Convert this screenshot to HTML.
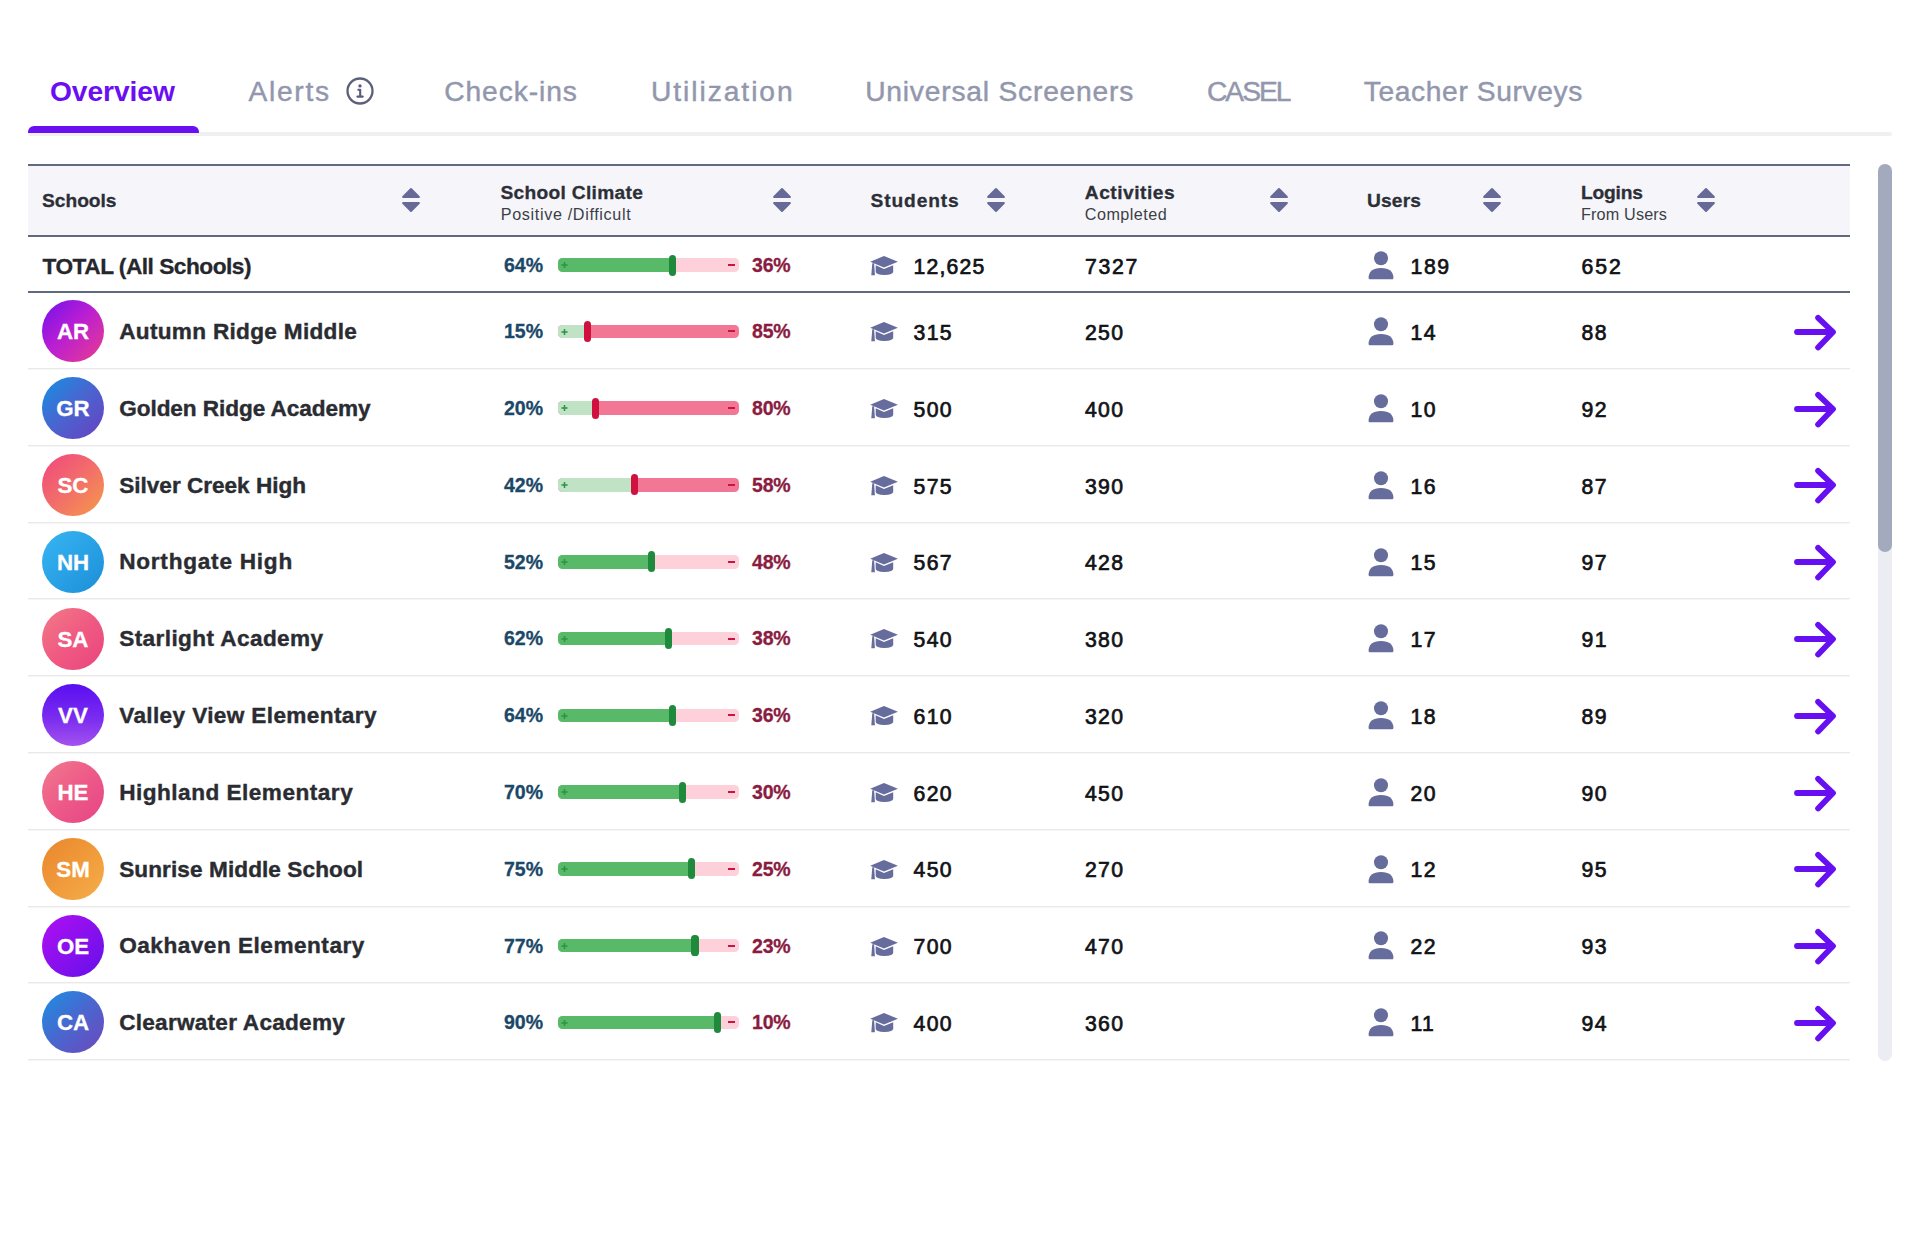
<!DOCTYPE html><html><head><meta charset="utf-8"><style>
html,body{margin:0;padding:0;background:#fff;width:1920px;height:1242px;overflow:hidden;}
body{position:relative;font-family:"Liberation Sans",sans-serif;}
.t{position:absolute;white-space:nowrap;line-height:1;font-weight:700;}
.a{position:absolute;}
</style></head><body>
<div class="a" style="left:28px;top:132px;width:1864px;height:4px;background:#eff0f2;border-radius:2px;"></div><div class="a" style="left:28px;top:126px;width:171px;height:7px;background:#6a0ff2;border-radius:6px 6px 0 0;"></div><svg class="a" style="left:343.5px;top:74.5px" width="32" height="32" viewBox="0 0 32 32"><circle cx="16" cy="16" r="12.5" fill="none" stroke="#5c6079" stroke-width="2.3"/><circle cx="16" cy="10.9" r="1.7" fill="#585c7c"/><path d="M14.3 14.7h1.9v6.4" fill="none" stroke="#585c7c" stroke-width="2.1" stroke-linecap="round" stroke-linejoin="round"/><path d="M13.4 21.6h5.3" fill="none" stroke="#585c7c" stroke-width="2.2" stroke-linecap="round"/></svg><div class="a" style="left:28px;top:164px;width:1822px;height:2px;background:#626a82;"></div><div class="a" style="left:28px;top:166px;width:1822px;height:69px;background:#f6f6fa;"></div><div class="a" style="left:28px;top:235px;width:1822px;height:2px;background:#606a7c;"></div><div class="a" style="left:28px;top:291px;width:1822px;height:2px;background:#606a7c;"></div><svg class="a" style="left:401.30px;top:186.00px" width="20" height="28" viewBox="-10 -14 20 28"><path d="M0 -11 L7.9 -3 H-7.9 Z M0 11 L7.9 3 H-7.9 Z" fill="#676a97" stroke="#676a97" stroke-width="2" stroke-linejoin="round"/></svg><svg class="a" style="left:771.90px;top:186.00px" width="20" height="28" viewBox="-10 -14 20 28"><path d="M0 -11 L7.9 -3 H-7.9 Z M0 11 L7.9 3 H-7.9 Z" fill="#676a97" stroke="#676a97" stroke-width="2" stroke-linejoin="round"/></svg><svg class="a" style="left:985.50px;top:186.00px" width="20" height="28" viewBox="-10 -14 20 28"><path d="M0 -11 L7.9 -3 H-7.9 Z M0 11 L7.9 3 H-7.9 Z" fill="#676a97" stroke="#676a97" stroke-width="2" stroke-linejoin="round"/></svg><svg class="a" style="left:1268.70px;top:186.00px" width="20" height="28" viewBox="-10 -14 20 28"><path d="M0 -11 L7.9 -3 H-7.9 Z M0 11 L7.9 3 H-7.9 Z" fill="#676a97" stroke="#676a97" stroke-width="2" stroke-linejoin="round"/></svg><svg class="a" style="left:1482.30px;top:186.00px" width="20" height="28" viewBox="-10 -14 20 28"><path d="M0 -11 L7.9 -3 H-7.9 Z M0 11 L7.9 3 H-7.9 Z" fill="#676a97" stroke="#676a97" stroke-width="2" stroke-linejoin="round"/></svg><svg class="a" style="left:1696.00px;top:186.00px" width="20" height="28" viewBox="-10 -14 20 28"><path d="M0 -11 L7.9 -3 H-7.9 Z M0 11 L7.9 3 H-7.9 Z" fill="#676a97" stroke="#676a97" stroke-width="2" stroke-linejoin="round"/></svg><div class="a" style="left:557.5px;top:258.20px;width:181px;height:13.6px;border-radius:4.5px;overflow:hidden;background:#fdd0da;"><div style="position:absolute;left:0;top:0;width:114.83px;height:100%;background:#58b968;"></div></div><svg class="a" style="left:560.0px;top:258.20px" width="10" height="14" viewBox="0 0 10 14"><path d="M1.4 7h6.2M4.5 3.9v6.2" stroke="#2b9443" stroke-width="1.5"/></svg><div class="a" style="left:728.0px;top:264.00px;width:7px;height:2px;background:#c9143f;"></div><div class="a" style="left:668.73px;top:254.50px;width:7.2px;height:21px;border-radius:3.6px;background:#1f8a3c;"></div><svg class="a" style="left:870px;top:255.0px" width="28" height="21" viewBox="0 0 28 21"><path d="M14 0.9 L27.9 6.8 L14 12.6 L0.2 6.8 Z" fill="#666c9c"/><path d="M5.7 10.3 L14 13.9 L23.2 10.3 V16.8 Q23.2 19.9 14.4 19.9 Q5.7 19.9 5.7 16.8 Z" fill="#666c9c"/><path d="M2.3 8.2 L4.1 8.2 L4.9 20.3 L1.3 20.3 Z" fill="#666c9c"/></svg><svg class="a" style="left:1367.8px;top:250.7px" width="26" height="29" viewBox="0 0 26 29"><circle cx="13" cy="7.2" r="7" fill="#666c9c"/><path d="M0.6 27.0 Q0.6 17 13 17 Q25.4 17 25.4 27.0 Q25.4 28.2 24.2 28.2 H1.8 Q0.6 28.2 0.6 27.0 Z" fill="#666c9c"/></svg><div class="a" style="left:28px;top:368.0px;width:1822px;height:1px;background:#e9e9ec;box-shadow:0 1px 0 #f6f6f7;"></div><div class="a" style="left:42px;top:300.4px;width:62px;height:62px;border-radius:50%;background:linear-gradient(135deg,#7010ec 0%,#b81ed4 45%,#ea3c8c 100%);"></div><div class="a" style="left:557.5px;top:324.60px;width:181px;height:13.6px;border-radius:4.5px;overflow:hidden;background:#f27795;"><div style="position:absolute;left:0;top:0;width:29.67px;height:100%;background:#bfe3c4;"></div></div><svg class="a" style="left:560.0px;top:324.60px" width="10" height="14" viewBox="0 0 10 14"><path d="M1.4 7h6.2M4.5 3.9v6.2" stroke="#2b9443" stroke-width="1.5"/></svg><div class="a" style="left:728.0px;top:330.40px;width:7px;height:2px;background:#c9143f;"></div><div class="a" style="left:583.57px;top:320.90px;width:7.2px;height:21px;border-radius:3.6px;background:#d0103f;"></div><svg class="a" style="left:870px;top:321.3px" width="28" height="21" viewBox="0 0 28 21"><path d="M14 0.9 L27.9 6.8 L14 12.6 L0.2 6.8 Z" fill="#666c9c"/><path d="M5.7 10.3 L14 13.9 L23.2 10.3 V16.8 Q23.2 19.9 14.4 19.9 Q5.7 19.9 5.7 16.8 Z" fill="#666c9c"/><path d="M2.3 8.2 L4.1 8.2 L4.9 20.3 L1.3 20.3 Z" fill="#666c9c"/></svg><svg class="a" style="left:1367.8px;top:317.2px" width="26" height="29" viewBox="0 0 26 29"><circle cx="13" cy="7.2" r="7" fill="#666c9c"/><path d="M0.6 27.0 Q0.6 17 13 17 Q25.4 17 25.4 27.0 Q25.4 28.2 24.2 28.2 H1.8 Q0.6 28.2 0.6 27.0 Z" fill="#666c9c"/></svg><svg class="a" style="left:1790px;top:311.90px" width="50" height="40" viewBox="0 0 50 40"><path d="M7 20 H42.5 M28.1 5.8 L43 20 L28.1 35.5" fill="none" stroke="#6610f2" stroke-width="5.8" stroke-linecap="round" stroke-linejoin="round"/></svg><div class="a" style="left:28px;top:444.8px;width:1822px;height:1px;background:#e9e9ec;box-shadow:0 1px 0 #f6f6f7;"></div><div class="a" style="left:42px;top:377.2px;width:62px;height:62px;border-radius:50%;background:linear-gradient(135deg,#1590e4 0%,#4a64cf 50%,#6a3fc2 100%);"></div><div class="a" style="left:557.5px;top:401.38px;width:181px;height:13.6px;border-radius:4.5px;overflow:hidden;background:#f27795;"><div style="position:absolute;left:0;top:0;width:38.36px;height:100%;background:#bfe3c4;"></div></div><svg class="a" style="left:560.0px;top:401.38px" width="10" height="14" viewBox="0 0 10 14"><path d="M1.4 7h6.2M4.5 3.9v6.2" stroke="#2b9443" stroke-width="1.5"/></svg><div class="a" style="left:728.0px;top:407.18px;width:7px;height:2px;background:#c9143f;"></div><div class="a" style="left:592.26px;top:397.68px;width:7.2px;height:21px;border-radius:3.6px;background:#d0103f;"></div><svg class="a" style="left:870px;top:398.1px" width="28" height="21" viewBox="0 0 28 21"><path d="M14 0.9 L27.9 6.8 L14 12.6 L0.2 6.8 Z" fill="#666c9c"/><path d="M5.7 10.3 L14 13.9 L23.2 10.3 V16.8 Q23.2 19.9 14.4 19.9 Q5.7 19.9 5.7 16.8 Z" fill="#666c9c"/><path d="M2.3 8.2 L4.1 8.2 L4.9 20.3 L1.3 20.3 Z" fill="#666c9c"/></svg><svg class="a" style="left:1367.8px;top:394.0px" width="26" height="29" viewBox="0 0 26 29"><circle cx="13" cy="7.2" r="7" fill="#666c9c"/><path d="M0.6 27.0 Q0.6 17 13 17 Q25.4 17 25.4 27.0 Q25.4 28.2 24.2 28.2 H1.8 Q0.6 28.2 0.6 27.0 Z" fill="#666c9c"/></svg><svg class="a" style="left:1790px;top:388.68px" width="50" height="40" viewBox="0 0 50 40"><path d="M7 20 H42.5 M28.1 5.8 L43 20 L28.1 35.5" fill="none" stroke="#6610f2" stroke-width="5.8" stroke-linecap="round" stroke-linejoin="round"/></svg><div class="a" style="left:28px;top:521.6px;width:1822px;height:1px;background:#e9e9ec;box-shadow:0 1px 0 #f6f6f7;"></div><div class="a" style="left:42px;top:454.0px;width:62px;height:62px;border-radius:50%;background:linear-gradient(135deg,#f0467e 0%,#f26e6a 50%,#f69a48 100%);"></div><div class="a" style="left:557.5px;top:478.16px;width:181px;height:13.6px;border-radius:4.5px;overflow:hidden;background:#f27795;"><div style="position:absolute;left:0;top:0;width:76.60px;height:100%;background:#bfe3c4;"></div></div><svg class="a" style="left:560.0px;top:478.16px" width="10" height="14" viewBox="0 0 10 14"><path d="M1.4 7h6.2M4.5 3.9v6.2" stroke="#2b9443" stroke-width="1.5"/></svg><div class="a" style="left:728.0px;top:483.96px;width:7px;height:2px;background:#c9143f;"></div><div class="a" style="left:630.50px;top:474.46px;width:7.2px;height:21px;border-radius:3.6px;background:#d0103f;"></div><svg class="a" style="left:870px;top:474.9px" width="28" height="21" viewBox="0 0 28 21"><path d="M14 0.9 L27.9 6.8 L14 12.6 L0.2 6.8 Z" fill="#666c9c"/><path d="M5.7 10.3 L14 13.9 L23.2 10.3 V16.8 Q23.2 19.9 14.4 19.9 Q5.7 19.9 5.7 16.8 Z" fill="#666c9c"/><path d="M2.3 8.2 L4.1 8.2 L4.9 20.3 L1.3 20.3 Z" fill="#666c9c"/></svg><svg class="a" style="left:1367.8px;top:470.8px" width="26" height="29" viewBox="0 0 26 29"><circle cx="13" cy="7.2" r="7" fill="#666c9c"/><path d="M0.6 27.0 Q0.6 17 13 17 Q25.4 17 25.4 27.0 Q25.4 28.2 24.2 28.2 H1.8 Q0.6 28.2 0.6 27.0 Z" fill="#666c9c"/></svg><svg class="a" style="left:1790px;top:465.46px" width="50" height="40" viewBox="0 0 50 40"><path d="M7 20 H42.5 M28.1 5.8 L43 20 L28.1 35.5" fill="none" stroke="#6610f2" stroke-width="5.8" stroke-linecap="round" stroke-linejoin="round"/></svg><div class="a" style="left:28px;top:598.3px;width:1822px;height:1px;background:#e9e9ec;box-shadow:0 1px 0 #f6f6f7;"></div><div class="a" style="left:42px;top:530.7px;width:62px;height:62px;border-radius:50%;background:linear-gradient(135deg,#36b6f2 0%,#2aa2e6 50%,#1b8ed6 100%);"></div><div class="a" style="left:557.5px;top:554.94px;width:181px;height:13.6px;border-radius:4.5px;overflow:hidden;background:#fdd0da;"><div style="position:absolute;left:0;top:0;width:93.98px;height:100%;background:#58b968;"></div></div><svg class="a" style="left:560.0px;top:554.94px" width="10" height="14" viewBox="0 0 10 14"><path d="M1.4 7h6.2M4.5 3.9v6.2" stroke="#2b9443" stroke-width="1.5"/></svg><div class="a" style="left:728.0px;top:560.74px;width:7px;height:2px;background:#c9143f;"></div><div class="a" style="left:647.88px;top:551.24px;width:7.2px;height:21px;border-radius:3.6px;background:#1f8a3c;"></div><svg class="a" style="left:870px;top:551.6px" width="28" height="21" viewBox="0 0 28 21"><path d="M14 0.9 L27.9 6.8 L14 12.6 L0.2 6.8 Z" fill="#666c9c"/><path d="M5.7 10.3 L14 13.9 L23.2 10.3 V16.8 Q23.2 19.9 14.4 19.9 Q5.7 19.9 5.7 16.8 Z" fill="#666c9c"/><path d="M2.3 8.2 L4.1 8.2 L4.9 20.3 L1.3 20.3 Z" fill="#666c9c"/></svg><svg class="a" style="left:1367.8px;top:547.5px" width="26" height="29" viewBox="0 0 26 29"><circle cx="13" cy="7.2" r="7" fill="#666c9c"/><path d="M0.6 27.0 Q0.6 17 13 17 Q25.4 17 25.4 27.0 Q25.4 28.2 24.2 28.2 H1.8 Q0.6 28.2 0.6 27.0 Z" fill="#666c9c"/></svg><svg class="a" style="left:1790px;top:542.24px" width="50" height="40" viewBox="0 0 50 40"><path d="M7 20 H42.5 M28.1 5.8 L43 20 L28.1 35.5" fill="none" stroke="#6610f2" stroke-width="5.8" stroke-linecap="round" stroke-linejoin="round"/></svg><div class="a" style="left:28px;top:675.1px;width:1822px;height:1px;background:#e9e9ec;box-shadow:0 1px 0 #f6f6f7;"></div><div class="a" style="left:42px;top:607.5px;width:62px;height:62px;border-radius:50%;background:linear-gradient(135deg,#f27a86 0%,#f05a82 50%,#e8447e 100%);"></div><div class="a" style="left:557.5px;top:631.72px;width:181px;height:13.6px;border-radius:4.5px;overflow:hidden;background:#fdd0da;"><div style="position:absolute;left:0;top:0;width:111.36px;height:100%;background:#58b968;"></div></div><svg class="a" style="left:560.0px;top:631.72px" width="10" height="14" viewBox="0 0 10 14"><path d="M1.4 7h6.2M4.5 3.9v6.2" stroke="#2b9443" stroke-width="1.5"/></svg><div class="a" style="left:728.0px;top:637.52px;width:7px;height:2px;background:#c9143f;"></div><div class="a" style="left:665.26px;top:628.02px;width:7.2px;height:21px;border-radius:3.6px;background:#1f8a3c;"></div><svg class="a" style="left:870px;top:628.4px" width="28" height="21" viewBox="0 0 28 21"><path d="M14 0.9 L27.9 6.8 L14 12.6 L0.2 6.8 Z" fill="#666c9c"/><path d="M5.7 10.3 L14 13.9 L23.2 10.3 V16.8 Q23.2 19.9 14.4 19.9 Q5.7 19.9 5.7 16.8 Z" fill="#666c9c"/><path d="M2.3 8.2 L4.1 8.2 L4.9 20.3 L1.3 20.3 Z" fill="#666c9c"/></svg><svg class="a" style="left:1367.8px;top:624.3px" width="26" height="29" viewBox="0 0 26 29"><circle cx="13" cy="7.2" r="7" fill="#666c9c"/><path d="M0.6 27.0 Q0.6 17 13 17 Q25.4 17 25.4 27.0 Q25.4 28.2 24.2 28.2 H1.8 Q0.6 28.2 0.6 27.0 Z" fill="#666c9c"/></svg><svg class="a" style="left:1790px;top:619.02px" width="50" height="40" viewBox="0 0 50 40"><path d="M7 20 H42.5 M28.1 5.8 L43 20 L28.1 35.5" fill="none" stroke="#6610f2" stroke-width="5.8" stroke-linecap="round" stroke-linejoin="round"/></svg><div class="a" style="left:28px;top:751.9px;width:1822px;height:1px;background:#e9e9ec;box-shadow:0 1px 0 #f6f6f7;"></div><div class="a" style="left:42px;top:684.3px;width:62px;height:62px;border-radius:50%;background:linear-gradient(180deg,#5a0ef0 0%,#7a2cf0 55%,#a452ee 100%);"></div><div class="a" style="left:557.5px;top:708.50px;width:181px;height:13.6px;border-radius:4.5px;overflow:hidden;background:#fdd0da;"><div style="position:absolute;left:0;top:0;width:114.83px;height:100%;background:#58b968;"></div></div><svg class="a" style="left:560.0px;top:708.50px" width="10" height="14" viewBox="0 0 10 14"><path d="M1.4 7h6.2M4.5 3.9v6.2" stroke="#2b9443" stroke-width="1.5"/></svg><div class="a" style="left:728.0px;top:714.30px;width:7px;height:2px;background:#c9143f;"></div><div class="a" style="left:668.73px;top:704.80px;width:7.2px;height:21px;border-radius:3.6px;background:#1f8a3c;"></div><svg class="a" style="left:870px;top:705.2px" width="28" height="21" viewBox="0 0 28 21"><path d="M14 0.9 L27.9 6.8 L14 12.6 L0.2 6.8 Z" fill="#666c9c"/><path d="M5.7 10.3 L14 13.9 L23.2 10.3 V16.8 Q23.2 19.9 14.4 19.9 Q5.7 19.9 5.7 16.8 Z" fill="#666c9c"/><path d="M2.3 8.2 L4.1 8.2 L4.9 20.3 L1.3 20.3 Z" fill="#666c9c"/></svg><svg class="a" style="left:1367.8px;top:701.1px" width="26" height="29" viewBox="0 0 26 29"><circle cx="13" cy="7.2" r="7" fill="#666c9c"/><path d="M0.6 27.0 Q0.6 17 13 17 Q25.4 17 25.4 27.0 Q25.4 28.2 24.2 28.2 H1.8 Q0.6 28.2 0.6 27.0 Z" fill="#666c9c"/></svg><svg class="a" style="left:1790px;top:695.80px" width="50" height="40" viewBox="0 0 50 40"><path d="M7 20 H42.5 M28.1 5.8 L43 20 L28.1 35.5" fill="none" stroke="#6610f2" stroke-width="5.8" stroke-linecap="round" stroke-linejoin="round"/></svg><div class="a" style="left:28px;top:828.7px;width:1822px;height:1px;background:#e9e9ec;box-shadow:0 1px 0 #f6f6f7;"></div><div class="a" style="left:42px;top:761.1px;width:62px;height:62px;border-radius:50%;background:linear-gradient(135deg,#f07a8e 0%,#ee5a88 50%,#e64484 100%);"></div><div class="a" style="left:557.5px;top:785.28px;width:181px;height:13.6px;border-radius:4.5px;overflow:hidden;background:#fdd0da;"><div style="position:absolute;left:0;top:0;width:125.26px;height:100%;background:#58b968;"></div></div><svg class="a" style="left:560.0px;top:785.28px" width="10" height="14" viewBox="0 0 10 14"><path d="M1.4 7h6.2M4.5 3.9v6.2" stroke="#2b9443" stroke-width="1.5"/></svg><div class="a" style="left:728.0px;top:791.08px;width:7px;height:2px;background:#c9143f;"></div><div class="a" style="left:679.16px;top:781.58px;width:7.2px;height:21px;border-radius:3.6px;background:#1f8a3c;"></div><svg class="a" style="left:870px;top:782.0px" width="28" height="21" viewBox="0 0 28 21"><path d="M14 0.9 L27.9 6.8 L14 12.6 L0.2 6.8 Z" fill="#666c9c"/><path d="M5.7 10.3 L14 13.9 L23.2 10.3 V16.8 Q23.2 19.9 14.4 19.9 Q5.7 19.9 5.7 16.8 Z" fill="#666c9c"/><path d="M2.3 8.2 L4.1 8.2 L4.9 20.3 L1.3 20.3 Z" fill="#666c9c"/></svg><svg class="a" style="left:1367.8px;top:777.9px" width="26" height="29" viewBox="0 0 26 29"><circle cx="13" cy="7.2" r="7" fill="#666c9c"/><path d="M0.6 27.0 Q0.6 17 13 17 Q25.4 17 25.4 27.0 Q25.4 28.2 24.2 28.2 H1.8 Q0.6 28.2 0.6 27.0 Z" fill="#666c9c"/></svg><svg class="a" style="left:1790px;top:772.58px" width="50" height="40" viewBox="0 0 50 40"><path d="M7 20 H42.5 M28.1 5.8 L43 20 L28.1 35.5" fill="none" stroke="#6610f2" stroke-width="5.8" stroke-linecap="round" stroke-linejoin="round"/></svg><div class="a" style="left:28px;top:905.5px;width:1822px;height:1px;background:#e9e9ec;box-shadow:0 1px 0 #f6f6f7;"></div><div class="a" style="left:42px;top:837.9px;width:62px;height:62px;border-radius:50%;background:linear-gradient(135deg,#e9862e 0%,#f09a3a 50%,#f6ae4a 100%);"></div><div class="a" style="left:557.5px;top:862.06px;width:181px;height:13.6px;border-radius:4.5px;overflow:hidden;background:#fdd0da;"><div style="position:absolute;left:0;top:0;width:133.95px;height:100%;background:#58b968;"></div></div><svg class="a" style="left:560.0px;top:862.06px" width="10" height="14" viewBox="0 0 10 14"><path d="M1.4 7h6.2M4.5 3.9v6.2" stroke="#2b9443" stroke-width="1.5"/></svg><div class="a" style="left:728.0px;top:867.86px;width:7px;height:2px;background:#c9143f;"></div><div class="a" style="left:687.85px;top:858.36px;width:7.2px;height:21px;border-radius:3.6px;background:#1f8a3c;"></div><svg class="a" style="left:870px;top:858.8px" width="28" height="21" viewBox="0 0 28 21"><path d="M14 0.9 L27.9 6.8 L14 12.6 L0.2 6.8 Z" fill="#666c9c"/><path d="M5.7 10.3 L14 13.9 L23.2 10.3 V16.8 Q23.2 19.9 14.4 19.9 Q5.7 19.9 5.7 16.8 Z" fill="#666c9c"/><path d="M2.3 8.2 L4.1 8.2 L4.9 20.3 L1.3 20.3 Z" fill="#666c9c"/></svg><svg class="a" style="left:1367.8px;top:854.7px" width="26" height="29" viewBox="0 0 26 29"><circle cx="13" cy="7.2" r="7" fill="#666c9c"/><path d="M0.6 27.0 Q0.6 17 13 17 Q25.4 17 25.4 27.0 Q25.4 28.2 24.2 28.2 H1.8 Q0.6 28.2 0.6 27.0 Z" fill="#666c9c"/></svg><svg class="a" style="left:1790px;top:849.36px" width="50" height="40" viewBox="0 0 50 40"><path d="M7 20 H42.5 M28.1 5.8 L43 20 L28.1 35.5" fill="none" stroke="#6610f2" stroke-width="5.8" stroke-linecap="round" stroke-linejoin="round"/></svg><div class="a" style="left:28px;top:982.2px;width:1822px;height:1px;background:#e9e9ec;box-shadow:0 1px 0 #f6f6f7;"></div><div class="a" style="left:42px;top:914.6px;width:62px;height:62px;border-radius:50%;background:linear-gradient(135deg,#b010f2 0%,#8a10ee 50%,#6410ea 100%);"></div><div class="a" style="left:557.5px;top:938.84px;width:181px;height:13.6px;border-radius:4.5px;overflow:hidden;background:#fdd0da;"><div style="position:absolute;left:0;top:0;width:137.43px;height:100%;background:#58b968;"></div></div><svg class="a" style="left:560.0px;top:938.84px" width="10" height="14" viewBox="0 0 10 14"><path d="M1.4 7h6.2M4.5 3.9v6.2" stroke="#2b9443" stroke-width="1.5"/></svg><div class="a" style="left:728.0px;top:944.64px;width:7px;height:2px;background:#c9143f;"></div><div class="a" style="left:691.33px;top:935.14px;width:7.2px;height:21px;border-radius:3.6px;background:#1f8a3c;"></div><svg class="a" style="left:870px;top:935.5px" width="28" height="21" viewBox="0 0 28 21"><path d="M14 0.9 L27.9 6.8 L14 12.6 L0.2 6.8 Z" fill="#666c9c"/><path d="M5.7 10.3 L14 13.9 L23.2 10.3 V16.8 Q23.2 19.9 14.4 19.9 Q5.7 19.9 5.7 16.8 Z" fill="#666c9c"/><path d="M2.3 8.2 L4.1 8.2 L4.9 20.3 L1.3 20.3 Z" fill="#666c9c"/></svg><svg class="a" style="left:1367.8px;top:931.4px" width="26" height="29" viewBox="0 0 26 29"><circle cx="13" cy="7.2" r="7" fill="#666c9c"/><path d="M0.6 27.0 Q0.6 17 13 17 Q25.4 17 25.4 27.0 Q25.4 28.2 24.2 28.2 H1.8 Q0.6 28.2 0.6 27.0 Z" fill="#666c9c"/></svg><svg class="a" style="left:1790px;top:926.14px" width="50" height="40" viewBox="0 0 50 40"><path d="M7 20 H42.5 M28.1 5.8 L43 20 L28.1 35.5" fill="none" stroke="#6610f2" stroke-width="5.8" stroke-linecap="round" stroke-linejoin="round"/></svg><div class="a" style="left:28px;top:1059.0px;width:1822px;height:1px;background:#e9e9ec;box-shadow:0 1px 0 #f6f6f7;"></div><div class="a" style="left:42px;top:991.4px;width:62px;height:62px;border-radius:50%;background:linear-gradient(135deg,#1a90e2 0%,#4a66cf 50%,#6e48bd 100%);"></div><div class="a" style="left:557.5px;top:1015.62px;width:181px;height:13.6px;border-radius:4.5px;overflow:hidden;background:#fdd0da;"><div style="position:absolute;left:0;top:0;width:160.02px;height:100%;background:#58b968;"></div></div><svg class="a" style="left:560.0px;top:1015.62px" width="10" height="14" viewBox="0 0 10 14"><path d="M1.4 7h6.2M4.5 3.9v6.2" stroke="#2b9443" stroke-width="1.5"/></svg><div class="a" style="left:728.0px;top:1021.42px;width:7px;height:2px;background:#c9143f;"></div><div class="a" style="left:713.92px;top:1011.92px;width:7.2px;height:21px;border-radius:3.6px;background:#1f8a3c;"></div><svg class="a" style="left:870px;top:1012.3px" width="28" height="21" viewBox="0 0 28 21"><path d="M14 0.9 L27.9 6.8 L14 12.6 L0.2 6.8 Z" fill="#666c9c"/><path d="M5.7 10.3 L14 13.9 L23.2 10.3 V16.8 Q23.2 19.9 14.4 19.9 Q5.7 19.9 5.7 16.8 Z" fill="#666c9c"/><path d="M2.3 8.2 L4.1 8.2 L4.9 20.3 L1.3 20.3 Z" fill="#666c9c"/></svg><svg class="a" style="left:1367.8px;top:1008.2px" width="26" height="29" viewBox="0 0 26 29"><circle cx="13" cy="7.2" r="7" fill="#666c9c"/><path d="M0.6 27.0 Q0.6 17 13 17 Q25.4 17 25.4 27.0 Q25.4 28.2 24.2 28.2 H1.8 Q0.6 28.2 0.6 27.0 Z" fill="#666c9c"/></svg><svg class="a" style="left:1790px;top:1002.92px" width="50" height="40" viewBox="0 0 50 40"><path d="M7 20 H42.5 M28.1 5.8 L43 20 L28.1 35.5" fill="none" stroke="#6610f2" stroke-width="5.8" stroke-linecap="round" stroke-linejoin="round"/></svg><div class="a" style="left:1878px;top:164px;width:14px;height:897px;border-radius:7px;background:#ecedf3;"></div><div class="a" style="left:1878px;top:164px;width:14px;height:388px;border-radius:7px;background:#a3aabe;"></div>
<div class="t" style="left:50.00px;top:77.42px;font-size:28.2px;color:#6a0ff2;letter-spacing:-0.070px;">Overview</div>
<div class="t" style="left:248.50px;top:77.42px;font-size:28.2px;color:#9297ad;font-weight:400;letter-spacing:1.690px;-webkit-text-stroke:0.45px #9297ad;">Alerts</div>
<div class="t" style="left:444.20px;top:77.42px;font-size:28.2px;color:#9297ad;font-weight:400;letter-spacing:0.931px;-webkit-text-stroke:0.45px #9297ad;">Check-ins</div>
<div class="t" style="left:651.00px;top:77.42px;font-size:28.2px;color:#9297ad;font-weight:400;letter-spacing:1.945px;-webkit-text-stroke:0.45px #9297ad;">Utilization</div>
<div class="t" style="left:865.20px;top:77.42px;font-size:28.2px;color:#9297ad;font-weight:400;letter-spacing:0.796px;-webkit-text-stroke:0.45px #9297ad;">Universal Screeners</div>
<div class="t" style="left:1207.00px;top:77.42px;font-size:28.2px;color:#9297ad;font-weight:400;letter-spacing:-1.999px;-webkit-text-stroke:0.45px #9297ad;">CASEL</div>
<div class="t" style="left:1363.80px;top:77.42px;font-size:28.2px;color:#9297ad;font-weight:400;letter-spacing:0.620px;-webkit-text-stroke:0.45px #9297ad;">Teacher Surveys</div>
<div class="t" style="left:42.00px;top:191.44px;font-size:19.2px;color:#2c2f37;letter-spacing:-0.015px;-webkit-text-stroke:0.3px #2c2f37;">Schools</div>
<div class="t" style="left:500.40px;top:182.64px;font-size:19.2px;color:#2c2f37;letter-spacing:0.298px;-webkit-text-stroke:0.3px #2c2f37;">School Climate</div>
<div class="t" style="left:500.80px;top:205.98px;font-size:16.2px;color:#3c3f47;font-weight:400;letter-spacing:0.636px;">Positive /Difficult</div>
<div class="t" style="left:870.50px;top:191.44px;font-size:19.2px;color:#2c2f37;letter-spacing:0.882px;-webkit-text-stroke:0.3px #2c2f37;">Students</div>
<div class="t" style="left:1084.80px;top:182.64px;font-size:19.2px;color:#2c2f37;letter-spacing:0.512px;-webkit-text-stroke:0.3px #2c2f37;">Activities</div>
<div class="t" style="left:1084.80px;top:205.98px;font-size:16.2px;color:#3c3f47;font-weight:400;letter-spacing:0.459px;">Completed</div>
<div class="t" style="left:1367.00px;top:191.44px;font-size:19.2px;color:#2c2f37;letter-spacing:0.156px;-webkit-text-stroke:0.3px #2c2f37;">Users</div>
<div class="t" style="left:1581.00px;top:182.64px;font-size:19.2px;color:#2c2f37;letter-spacing:-0.186px;-webkit-text-stroke:0.3px #2c2f37;">Logins</div>
<div class="t" style="left:1581.00px;top:205.98px;font-size:16.2px;color:#3c3f47;font-weight:400;letter-spacing:0.155px;">From Users</div>
<div class="t" style="left:42.50px;top:254.53px;font-size:22.7px;color:#25272d;letter-spacing:-0.506px;-webkit-text-stroke:0.3px #25272d;">TOTAL (All Schools)</div>
<div class="t" style="left:504.00px;top:256.29px;font-size:19.5px;color:#1b4868;letter-spacing:-0.024px;-webkit-text-stroke:0.3px #1b4868;">64%</div>
<div class="t" style="left:752.00px;top:256.29px;font-size:19.5px;color:#8a1c42;letter-spacing:-0.174px;-webkit-text-stroke:0.3px #8a1c42;">36%</div>
<div class="t" style="left:913.60px;top:256.05px;font-size:21.2px;color:#111216;font-weight:400;letter-spacing:1.176px;-webkit-text-stroke:0.7px #111216;">12,625</div>
<div class="t" style="left:1085.00px;top:256.05px;font-size:21.2px;color:#111216;font-weight:400;letter-spacing:1.710px;-webkit-text-stroke:0.7px #111216;">7327</div>
<div class="t" style="left:1410.60px;top:256.05px;font-size:21.2px;color:#111216;font-weight:400;letter-spacing:1.524px;-webkit-text-stroke:0.7px #111216;">189</div>
<div class="t" style="left:1581.60px;top:256.05px;font-size:21.2px;color:#111216;font-weight:400;letter-spacing:1.875px;-webkit-text-stroke:0.7px #111216;">652</div>
<div class="t" style="left:56.89px;top:321.42px;font-size:22.3px;color:#ffffff;-webkit-text-stroke:0.3px #fff;">AR</div>
<div class="t" style="left:119.20px;top:321.06px;font-size:22.6px;color:#2a2c32;letter-spacing:0.302px;-webkit-text-stroke:0.4px #2a2c32;">Autumn Ridge Middle</div>
<div class="t" style="left:504.00px;top:322.29px;font-size:19.5px;color:#1b4868;letter-spacing:-0.024px;-webkit-text-stroke:0.3px #1b4868;">15%</div>
<div class="t" style="left:752.00px;top:322.29px;font-size:19.5px;color:#8a1c42;letter-spacing:-0.174px;-webkit-text-stroke:0.3px #8a1c42;">85%</div>
<div class="t" style="left:913.60px;top:321.95px;font-size:21.2px;color:#111216;font-weight:400;-webkit-text-stroke:0.7px #111216;letter-spacing:1.3px;">315</div>
<div class="t" style="left:1085.00px;top:321.95px;font-size:21.2px;color:#111216;font-weight:400;-webkit-text-stroke:0.7px #111216;letter-spacing:1.3px;">250</div>
<div class="t" style="left:1410.60px;top:321.95px;font-size:21.2px;color:#111216;font-weight:400;-webkit-text-stroke:0.7px #111216;letter-spacing:1.3px;">14</div>
<div class="t" style="left:1581.60px;top:321.95px;font-size:21.2px;color:#111216;font-weight:400;-webkit-text-stroke:0.7px #111216;letter-spacing:1.3px;">88</div>
<div class="t" style="left:56.27px;top:398.20px;font-size:22.3px;color:#ffffff;-webkit-text-stroke:0.3px #fff;">GR</div>
<div class="t" style="left:119.20px;top:397.84px;font-size:22.6px;color:#2a2c32;letter-spacing:-0.070px;-webkit-text-stroke:0.4px #2a2c32;">Golden Ridge Academy</div>
<div class="t" style="left:504.00px;top:399.07px;font-size:19.5px;color:#1b4868;letter-spacing:-0.024px;-webkit-text-stroke:0.3px #1b4868;">20%</div>
<div class="t" style="left:752.00px;top:399.07px;font-size:19.5px;color:#8a1c42;letter-spacing:-0.174px;-webkit-text-stroke:0.3px #8a1c42;">80%</div>
<div class="t" style="left:913.60px;top:398.73px;font-size:21.2px;color:#111216;font-weight:400;-webkit-text-stroke:0.7px #111216;letter-spacing:1.3px;">500</div>
<div class="t" style="left:1085.00px;top:398.73px;font-size:21.2px;color:#111216;font-weight:400;-webkit-text-stroke:0.7px #111216;letter-spacing:1.3px;">400</div>
<div class="t" style="left:1410.60px;top:398.73px;font-size:21.2px;color:#111216;font-weight:400;-webkit-text-stroke:0.7px #111216;letter-spacing:1.3px;">10</div>
<div class="t" style="left:1581.60px;top:398.73px;font-size:21.2px;color:#111216;font-weight:400;-webkit-text-stroke:0.7px #111216;letter-spacing:1.3px;">92</div>
<div class="t" style="left:57.50px;top:474.98px;font-size:22.3px;color:#ffffff;-webkit-text-stroke:0.3px #fff;">SC</div>
<div class="t" style="left:119.20px;top:474.62px;font-size:22.6px;color:#2a2c32;letter-spacing:-0.012px;-webkit-text-stroke:0.4px #2a2c32;">Silver Creek High</div>
<div class="t" style="left:504.00px;top:475.85px;font-size:19.5px;color:#1b4868;letter-spacing:-0.024px;-webkit-text-stroke:0.3px #1b4868;">42%</div>
<div class="t" style="left:752.00px;top:475.85px;font-size:19.5px;color:#8a1c42;letter-spacing:-0.174px;-webkit-text-stroke:0.3px #8a1c42;">58%</div>
<div class="t" style="left:913.60px;top:475.51px;font-size:21.2px;color:#111216;font-weight:400;-webkit-text-stroke:0.7px #111216;letter-spacing:1.3px;">575</div>
<div class="t" style="left:1085.00px;top:475.51px;font-size:21.2px;color:#111216;font-weight:400;-webkit-text-stroke:0.7px #111216;letter-spacing:1.3px;">390</div>
<div class="t" style="left:1410.60px;top:475.51px;font-size:21.2px;color:#111216;font-weight:400;-webkit-text-stroke:0.7px #111216;letter-spacing:1.3px;">16</div>
<div class="t" style="left:1581.60px;top:475.51px;font-size:21.2px;color:#111216;font-weight:400;-webkit-text-stroke:0.7px #111216;letter-spacing:1.3px;">87</div>
<div class="t" style="left:56.89px;top:551.76px;font-size:22.3px;color:#ffffff;-webkit-text-stroke:0.3px #fff;">NH</div>
<div class="t" style="left:119.20px;top:551.40px;font-size:22.6px;color:#2a2c32;letter-spacing:0.759px;-webkit-text-stroke:0.4px #2a2c32;">Northgate High</div>
<div class="t" style="left:504.00px;top:552.63px;font-size:19.5px;color:#1b4868;letter-spacing:-0.024px;-webkit-text-stroke:0.3px #1b4868;">52%</div>
<div class="t" style="left:752.00px;top:552.63px;font-size:19.5px;color:#8a1c42;letter-spacing:-0.174px;-webkit-text-stroke:0.3px #8a1c42;">48%</div>
<div class="t" style="left:913.60px;top:552.29px;font-size:21.2px;color:#111216;font-weight:400;-webkit-text-stroke:0.7px #111216;letter-spacing:1.3px;">567</div>
<div class="t" style="left:1085.00px;top:552.29px;font-size:21.2px;color:#111216;font-weight:400;-webkit-text-stroke:0.7px #111216;letter-spacing:1.3px;">428</div>
<div class="t" style="left:1410.60px;top:552.29px;font-size:21.2px;color:#111216;font-weight:400;-webkit-text-stroke:0.7px #111216;letter-spacing:1.3px;">15</div>
<div class="t" style="left:1581.60px;top:552.29px;font-size:21.2px;color:#111216;font-weight:400;-webkit-text-stroke:0.7px #111216;letter-spacing:1.3px;">97</div>
<div class="t" style="left:57.50px;top:628.54px;font-size:22.3px;color:#ffffff;-webkit-text-stroke:0.3px #fff;">SA</div>
<div class="t" style="left:119.20px;top:628.18px;font-size:22.6px;color:#2a2c32;letter-spacing:0.401px;-webkit-text-stroke:0.4px #2a2c32;">Starlight Academy</div>
<div class="t" style="left:504.00px;top:629.41px;font-size:19.5px;color:#1b4868;letter-spacing:-0.024px;-webkit-text-stroke:0.3px #1b4868;">62%</div>
<div class="t" style="left:752.00px;top:629.41px;font-size:19.5px;color:#8a1c42;letter-spacing:-0.174px;-webkit-text-stroke:0.3px #8a1c42;">38%</div>
<div class="t" style="left:913.60px;top:629.07px;font-size:21.2px;color:#111216;font-weight:400;-webkit-text-stroke:0.7px #111216;letter-spacing:1.3px;">540</div>
<div class="t" style="left:1085.00px;top:629.07px;font-size:21.2px;color:#111216;font-weight:400;-webkit-text-stroke:0.7px #111216;letter-spacing:1.3px;">380</div>
<div class="t" style="left:1410.60px;top:629.07px;font-size:21.2px;color:#111216;font-weight:400;-webkit-text-stroke:0.7px #111216;letter-spacing:1.3px;">17</div>
<div class="t" style="left:1581.60px;top:629.07px;font-size:21.2px;color:#111216;font-weight:400;-webkit-text-stroke:0.7px #111216;letter-spacing:1.3px;">91</div>
<div class="t" style="left:58.11px;top:705.32px;font-size:22.3px;color:#ffffff;-webkit-text-stroke:0.3px #fff;">VV</div>
<div class="t" style="left:119.20px;top:704.96px;font-size:22.6px;color:#2a2c32;letter-spacing:0.371px;-webkit-text-stroke:0.4px #2a2c32;">Valley View Elementary</div>
<div class="t" style="left:504.00px;top:706.19px;font-size:19.5px;color:#1b4868;letter-spacing:-0.024px;-webkit-text-stroke:0.3px #1b4868;">64%</div>
<div class="t" style="left:752.00px;top:706.19px;font-size:19.5px;color:#8a1c42;letter-spacing:-0.174px;-webkit-text-stroke:0.3px #8a1c42;">36%</div>
<div class="t" style="left:913.60px;top:705.85px;font-size:21.2px;color:#111216;font-weight:400;-webkit-text-stroke:0.7px #111216;letter-spacing:1.3px;">610</div>
<div class="t" style="left:1085.00px;top:705.85px;font-size:21.2px;color:#111216;font-weight:400;-webkit-text-stroke:0.7px #111216;letter-spacing:1.3px;">320</div>
<div class="t" style="left:1410.60px;top:705.85px;font-size:21.2px;color:#111216;font-weight:400;-webkit-text-stroke:0.7px #111216;letter-spacing:1.3px;">18</div>
<div class="t" style="left:1581.60px;top:705.85px;font-size:21.2px;color:#111216;font-weight:400;-webkit-text-stroke:0.7px #111216;letter-spacing:1.3px;">89</div>
<div class="t" style="left:57.50px;top:782.10px;font-size:22.3px;color:#ffffff;-webkit-text-stroke:0.3px #fff;">HE</div>
<div class="t" style="left:119.20px;top:781.74px;font-size:22.6px;color:#2a2c32;letter-spacing:0.488px;-webkit-text-stroke:0.4px #2a2c32;">Highland Elementary</div>
<div class="t" style="left:504.00px;top:782.97px;font-size:19.5px;color:#1b4868;letter-spacing:-0.024px;-webkit-text-stroke:0.3px #1b4868;">70%</div>
<div class="t" style="left:752.00px;top:782.97px;font-size:19.5px;color:#8a1c42;letter-spacing:-0.174px;-webkit-text-stroke:0.3px #8a1c42;">30%</div>
<div class="t" style="left:913.60px;top:782.63px;font-size:21.2px;color:#111216;font-weight:400;-webkit-text-stroke:0.7px #111216;letter-spacing:1.3px;">620</div>
<div class="t" style="left:1085.00px;top:782.63px;font-size:21.2px;color:#111216;font-weight:400;-webkit-text-stroke:0.7px #111216;letter-spacing:1.3px;">450</div>
<div class="t" style="left:1410.60px;top:782.63px;font-size:21.2px;color:#111216;font-weight:400;-webkit-text-stroke:0.7px #111216;letter-spacing:1.3px;">20</div>
<div class="t" style="left:1581.60px;top:782.63px;font-size:21.2px;color:#111216;font-weight:400;-webkit-text-stroke:0.7px #111216;letter-spacing:1.3px;">90</div>
<div class="t" style="left:56.27px;top:858.88px;font-size:22.3px;color:#ffffff;-webkit-text-stroke:0.3px #fff;">SM</div>
<div class="t" style="left:119.20px;top:858.52px;font-size:22.6px;color:#2a2c32;letter-spacing:0.081px;-webkit-text-stroke:0.4px #2a2c32;">Sunrise Middle School</div>
<div class="t" style="left:504.00px;top:859.75px;font-size:19.5px;color:#1b4868;letter-spacing:-0.024px;-webkit-text-stroke:0.3px #1b4868;">75%</div>
<div class="t" style="left:752.00px;top:859.75px;font-size:19.5px;color:#8a1c42;letter-spacing:-0.174px;-webkit-text-stroke:0.3px #8a1c42;">25%</div>
<div class="t" style="left:913.60px;top:859.41px;font-size:21.2px;color:#111216;font-weight:400;-webkit-text-stroke:0.7px #111216;letter-spacing:1.3px;">450</div>
<div class="t" style="left:1085.00px;top:859.41px;font-size:21.2px;color:#111216;font-weight:400;-webkit-text-stroke:0.7px #111216;letter-spacing:1.3px;">270</div>
<div class="t" style="left:1410.60px;top:859.41px;font-size:21.2px;color:#111216;font-weight:400;-webkit-text-stroke:0.7px #111216;letter-spacing:1.3px;">12</div>
<div class="t" style="left:1581.60px;top:859.41px;font-size:21.2px;color:#111216;font-weight:400;-webkit-text-stroke:0.7px #111216;letter-spacing:1.3px;">95</div>
<div class="t" style="left:56.89px;top:935.66px;font-size:22.3px;color:#ffffff;-webkit-text-stroke:0.3px #fff;">OE</div>
<div class="t" style="left:119.20px;top:935.30px;font-size:22.6px;color:#2a2c32;letter-spacing:0.502px;-webkit-text-stroke:0.4px #2a2c32;">Oakhaven Elementary</div>
<div class="t" style="left:504.00px;top:936.53px;font-size:19.5px;color:#1b4868;letter-spacing:-0.024px;-webkit-text-stroke:0.3px #1b4868;">77%</div>
<div class="t" style="left:752.00px;top:936.53px;font-size:19.5px;color:#8a1c42;letter-spacing:-0.174px;-webkit-text-stroke:0.3px #8a1c42;">23%</div>
<div class="t" style="left:913.60px;top:936.19px;font-size:21.2px;color:#111216;font-weight:400;-webkit-text-stroke:0.7px #111216;letter-spacing:1.3px;">700</div>
<div class="t" style="left:1085.00px;top:936.19px;font-size:21.2px;color:#111216;font-weight:400;-webkit-text-stroke:0.7px #111216;letter-spacing:1.3px;">470</div>
<div class="t" style="left:1410.60px;top:936.19px;font-size:21.2px;color:#111216;font-weight:400;-webkit-text-stroke:0.7px #111216;letter-spacing:1.3px;">22</div>
<div class="t" style="left:1581.60px;top:936.19px;font-size:21.2px;color:#111216;font-weight:400;-webkit-text-stroke:0.7px #111216;letter-spacing:1.3px;">93</div>
<div class="t" style="left:56.89px;top:1012.44px;font-size:22.3px;color:#ffffff;-webkit-text-stroke:0.3px #fff;">CA</div>
<div class="t" style="left:119.20px;top:1012.08px;font-size:22.6px;color:#2a2c32;letter-spacing:0.245px;-webkit-text-stroke:0.4px #2a2c32;">Clearwater Academy</div>
<div class="t" style="left:504.00px;top:1013.31px;font-size:19.5px;color:#1b4868;letter-spacing:-0.024px;-webkit-text-stroke:0.3px #1b4868;">90%</div>
<div class="t" style="left:752.00px;top:1013.31px;font-size:19.5px;color:#8a1c42;letter-spacing:-0.174px;-webkit-text-stroke:0.3px #8a1c42;">10%</div>
<div class="t" style="left:913.60px;top:1012.97px;font-size:21.2px;color:#111216;font-weight:400;-webkit-text-stroke:0.7px #111216;letter-spacing:1.3px;">400</div>
<div class="t" style="left:1085.00px;top:1012.97px;font-size:21.2px;color:#111216;font-weight:400;-webkit-text-stroke:0.7px #111216;letter-spacing:1.3px;">360</div>
<div class="t" style="left:1410.60px;top:1012.97px;font-size:21.2px;color:#111216;font-weight:400;-webkit-text-stroke:0.7px #111216;letter-spacing:1.3px;">11</div>
<div class="t" style="left:1581.60px;top:1012.97px;font-size:21.2px;color:#111216;font-weight:400;-webkit-text-stroke:0.7px #111216;letter-spacing:1.3px;">94</div>
</body></html>
